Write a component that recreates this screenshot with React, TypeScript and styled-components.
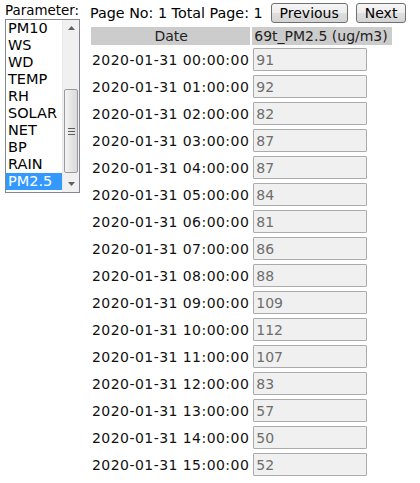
import * as React from "react";
import styled, { createGlobalStyle } from "styled-components";

const GlobalStyle = createGlobalStyle`
  html, body {
    margin: 0;
    padding: 0;
    background: #ffffff;
  }
  body {
    font-family: "DejaVu Sans", Verdana, sans-serif;
    font-size: 14px;
    color: #000;
  }
`;

const Page = styled.div`
  display: flex;
  align-items: flex-start;
  gap: 9px;
  padding: 3px 0 0 5px;
`;

const ParamColumn = styled.div`
  display: flex;
  flex-direction: column;
  width: 75px;
`;

const ParamLabel = styled.label`
  font-size: 13.4px;
  line-height: 16px;
  height: 16px;
  color: #000;
`;

const ListBox = styled.div`
  display: flex;
  width: 75px;
  height: 174px;
  box-sizing: border-box;
  border: 1px solid #828790;
  background: #fff;
`;

const Options = styled.div`
  flex: 1;
  display: flex;
  flex-direction: column;
  overflow: hidden;
`;

const Option = styled.div<{ $selected?: boolean }>`
  flex: none;
  height: 17px;
  line-height: 17px;
  padding-left: 2px;
  font-size: 14.5px;
  white-space: nowrap;
  background: ${(p) => (p.$selected ? "#3399ff" : "transparent")};
  color: ${(p) => (p.$selected ? "#ffffff" : "#000000")};
`;

const ScrollBar = styled.div`
  width: 16px;
  display: flex;
  flex-direction: column;
  background: #f0f0f0;
  border-left: 1px solid #e8e8e8;
`;

const ScrollArrow = styled.div`
  height: 16px;
  display: flex;
  align-items: center;
  justify-content: center;
`;

const Track = styled.div`
  flex: 1;
  display: flex;
  flex-direction: column;
  justify-content: flex-end;
  padding: 0 1px 3px 1px;
`;

const Thumb = styled.div`
  height: 84px;
  box-sizing: border-box;
  border: 1px solid #9a9a9a;
  border-radius: 2px;
  background: linear-gradient(to right, #f4f4f4, #e6e6e6 50%, #d9d9d9);
  display: flex;
  align-items: center;
  justify-content: center;
`;

const Grip = styled.div`
  width: 7px;
  height: 7px;
  background: repeating-linear-gradient(
    to bottom,
    #5c5c5c 0,
    #5c5c5c 1px,
    transparent 1px,
    transparent 3px
  );
`;

const MainColumn = styled.div`
  display: flex;
  flex-direction: column;
  align-items: flex-start;
`;

const Toolbar = styled.div`
  display: flex;
  align-items: flex-start;
  gap: 8px;
  height: 22px;
  padding-left: 1px;
`;

const PageInfo = styled.span`
  font-size: 14.3px;
  line-height: 20px;
`;

const PagerButton = styled.button`
  height: 20px;
  padding: 0 8px;
  font-family: inherit;
  font-size: 14px;
  line-height: 18px;
  color: #000;
  border: 1px solid #707070;
  border-radius: 3px;
  background: linear-gradient(to bottom, #f6f6f6 0%, #ececec 50%, #dfdfdf 51%, #d4d4d4 100%);
`;

const DataTable = styled.table`
  border-spacing: 2px;
  border-collapse: separate;
`;

const HeadCell = styled.th<{ $align?: string; $width: number }>`
  background: #cccccc;
  color: #222;
  font-weight: normal;
  width: ${(p) => p.$width}px;
  height: 18px;
  padding: 0 1px 0 2px;
  line-height: 18px;
  text-align: ${(p) => p.$align || "center"};
  white-space: nowrap;
`;

const DateCell = styled.td`
  padding: 1px;
  letter-spacing: 0.45px;
  white-space: nowrap;
  color: #111;
`;

const ValueCell = styled.td`
  padding: 1px;
`;

const ValueInput = styled.input`
  display: block;
  width: 114px;
  height: 23px;
  box-sizing: border-box;
  margin: 0;
  padding: 0 2px;
  font-family: inherit;
  font-size: 14px;
  color: #6d6d6d;
  background: #f0f0f0;
  border: 1px solid #ababab;
  border-radius: 1px;
`;

const params = ["PM10", "WS", "WD", "TEMP", "RH", "SOLAR", "NET", "BP", "RAIN", "PM2.5"];

const values = [91, 92, 82, 87, 87, 84, 81, 86, 88, 109, 112, 107, 83, 57, 50, 52];

const pad = (n: number) => String(n).padStart(2, "0");

export default function App() {
  const [selected, setSelected] = React.useState("PM2.5");

  return (
    <>
      <GlobalStyle />
      <Page>
        <ParamColumn>
          <ParamLabel>Parameter:</ParamLabel>
          <ListBox>
            <Options>
              {params.map((p) => (
                <Option key={p} $selected={p === selected} onClick={() => setSelected(p)}>
                  {p}
                </Option>
              ))}
            </Options>
            <ScrollBar>
              <ScrollArrow>
                <svg width="7" height="4" viewBox="0 0 7 4">
                  <path d="M0 4 L3.5 0 L7 4 Z" fill="#606060" />
                </svg>
              </ScrollArrow>
              <Track>
                <Thumb>
                  <Grip />
                </Thumb>
              </Track>
              <ScrollArrow>
                <svg width="7" height="4" viewBox="0 0 7 4">
                  <path d="M0 0 L7 0 L3.5 4 Z" fill="#606060" />
                </svg>
              </ScrollArrow>
            </ScrollBar>
          </ListBox>
        </ParamColumn>
        <MainColumn>
          <Toolbar>
            <PageInfo>Page No: 1 Total Page: 1</PageInfo>
            <PagerButton>Previous</PagerButton>
            <PagerButton>Next</PagerButton>
          </Toolbar>
          <DataTable>
            <thead>
              <tr>
                <HeadCell $width={156}>Date</HeadCell>
                <HeadCell $width={137} $align="left">
                  69t_PM2.5 (ug/m3)
                </HeadCell>
              </tr>
            </thead>
            <tbody>
              {values.map((v, i) => (
                <tr key={i}>
                  <DateCell>{`2020-01-31 ${pad(i)}:00:00`}</DateCell>
                  <ValueCell>
                    <ValueInput value={v} disabled readOnly />
                  </ValueCell>
                </tr>
              ))}
            </tbody>
          </DataTable>
        </MainColumn>
      </Page>
    </>
  );
}
